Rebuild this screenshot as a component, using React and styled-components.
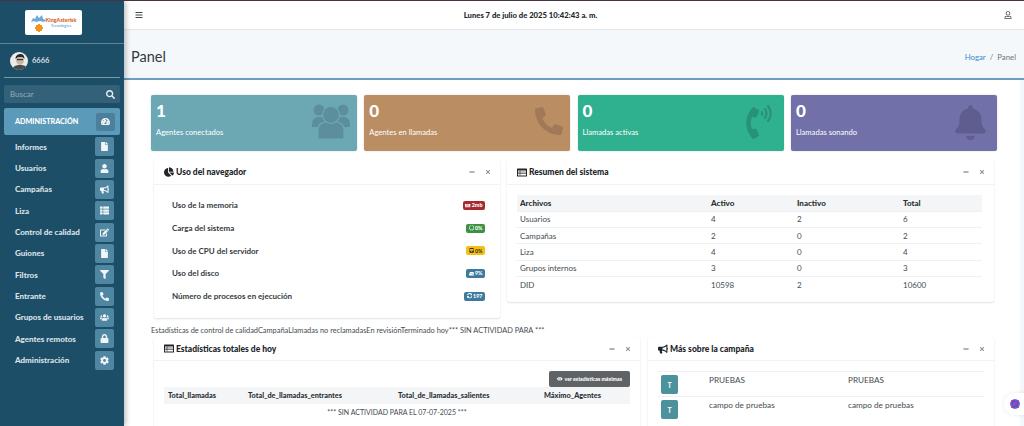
import React from "react";
import styled, { createGlobalStyle } from "styled-components";
import {
  FaBars, FaRegUser, FaSearch, FaTachometerAlt, FaFile, FaUser, FaBullhorn, FaThList, FaEdit, FaFilter,
  FaPhone, FaUsers, FaLock, FaCog, FaPhoneVolume, FaBell, FaChartPie, FaMinus, FaTimes, FaEye,
  FaMemory, FaHdd, FaTrain, FaSyncAlt, FaCircleNotch,
} from "react-icons/fa";

const Global = createGlobalStyle`
  html, body { margin: 0; padding: 0; height: 426px; overflow: hidden; background: #fff; }
  * { box-sizing: border-box; }
  body { font-family: "Lato", "Noto Sans", "Liberation Sans", sans-serif; color: #3a3f44; }
`;

const Shell = styled.div`
  display: flex; width: 1024px; height: 426px; overflow: hidden;
  border-top: 1px solid #4a3340;
`;
const Sidebar = styled.aside`
  width: 124px; flex: none; background: #1d4e68; display: flex; flex-direction: column;
  box-shadow: 2px 0 5px rgba(0,0,0,.25); z-index: 2;
`;
const Brand = styled.div`
  height: 43px; display: flex; align-items: center; padding: 1px 0 0 25px;
  border-bottom: 1px solid #5f8496;
`;
const LogoBox = styled.div`
  width: 57px; height: 25px; background: #fff; border-radius: 2px; display: flex; align-items: center; justify-content: center;
`;
const LogoText = styled.div`
  display: flex; flex-direction: column; align-items: center; line-height: 5.5px; font-size: 5.4px; font-weight: 900; color: #d9631e; white-space: nowrap; margin-top: 1px;
  span { color: #4a8fc7; font-size: 4px; font-weight: 400; }
`;
const UserRow = styled.div`
  height: 34px; margin: 0 4px; display: flex; align-items: center; gap: 4px; padding-left: 6px;
  border-bottom: 1px solid #7a98a6;
`;
const UserName = styled.span`font-size: 7.5px; font-weight: 700; color: #d5dde2;`;
const Search = styled.div`
  margin: 7px 4px 5px; height: 18px; background: #33617a; border-radius: 2px; display: flex; align-items: center; justify-content: space-between;
  padding: 0 5px 0 6px; font-size: 8px; color: #94aab6; svg { color: #e8eef1; font-size: 9px; }
`;
const Active = styled.div`
  margin: 0 4px 1px; height: 27px; background: #5b9ab9; border-radius: 2px; display: flex; align-items: center; justify-content: space-between;
  padding: 0 5px 0 11px; font-size: 7.2px; font-weight: 900; color: #fff;
`;
const Tile = styled.span`
  width: 19px; height: ${p => (p.$dark ? 18 : 19)}px; flex: none; border-radius: 2px; display: flex; align-items: center; justify-content: center;
  background: ${p => (p.$dark ? "#4c7f9b" : "#4f87a3")}; color: #f1f5f7; font-size: 9px;
`;
const Nav = styled.nav`display: flex; flex-direction: column;`;
const NavItem = styled.div`
  height: 21.35px; display: flex; align-items: center; justify-content: space-between; padding: 0 10px 0 15px;
  font-size: 8px; font-weight: 900; color: #d9e2e7; white-space: nowrap;
`;
const Main = styled.main`flex: 1; min-width: 0; display: flex; flex-direction: column; background: #f4f8fb;`;
const Topbar = styled.header`
  height: 29px; flex: none; background: #fff; border-bottom: 1px solid #e3e6e8; display: flex; align-items: center; justify-content: space-between;
  padding: 0 12px 0 11px; color: #40464b; font-size: 8px;
`;
const Clock = styled.div`font-size: 7.7px; font-weight: 900; color: #23272b; margin-right: 86px;`;
const TitleBand = styled.div`
  height: 50px; flex: none; display: flex; align-items: center; justify-content: space-between; padding: 5px 8px 0 7px;
  border-bottom: 2px solid #6a9fc0;
`;
const PageTitle = styled.h1`margin: 0; font-size: 14.5px; font-weight: 400; color: #343a40;`;
const Crumbs = styled.div`font-size: 7.8px; color: #6c757d; display: flex; gap: 4px; span:first-child { color: #3f8bd0; }`;
const Content = styled.div`
  flex: 1; width: 896px; min-height: 0; background: #fff; padding: 15px 23px 0 27px; overflow: hidden;
`;
const Stats = styled.div`display: grid; grid-template-columns: repeat(4, 206px); column-gap: 7.3px;`;
const Stat = styled.div`
  position: relative; height: 56px; border-radius: 2px; padding: 6px 5px; color: #fff; background: ${p => p.$bg}; overflow: hidden;
  box-shadow: 0 0 2px rgba(0,0,0,.18);
`;
const StatNum = styled.div`font-size: 17px; font-weight: 900; line-height: 20px;`;
const StatLabel = styled.div`font-size: 7.6px; margin-top: 6px; line-height: 11px;`;
const StatIcon = styled.span`
  position: absolute; right: ${p => p.$r}px; top: ${p => p.$t}px; color: ${p => p.$c}; font-size: ${p => p.$s}px; display: flex; line-height: 0;
  transform: ${p => (p.$flip ? "scaleX(-1)" : "none")};
`;
const Flip = styled.span`display: inline-flex; transform: scaleX(-1);`;
const Row = styled.div`display: flex; align-items: flex-start; margin-top: ${p => p.$mt}px; padding-left: ${p => p.$pl || 0}px;`;
const Panel = styled.section`
  width: ${p => p.$w}px; margin-right: ${p => p.$mr || 0}px; height: ${p => p.$h}px; background: #fff; border-radius: 2px; flex: none;
  box-shadow: 0 0 1px rgba(0,0,0,.07), 0 1px 2px rgba(0,0,0,.12);
`;
const PanelHead = styled.div`
  height: ${p => p.$h || 25}px; padding: 0 9px 0 10px; display: flex; align-items: center; justify-content: space-between; border-bottom: 1px solid #f0f2f3;
`;
const PanelTitle = styled.h3`
  margin: 0; display: flex; align-items: center; gap: 2px; font-size: 8.5px; font-weight: 900; color: #212529; svg { font-size: 10px; }
`;
const Tools = styled.div`display: flex; gap: 10px; align-items: center; color: #8d9499; font-size: 6px; svg:first-child { color: #666d72; }`;
const UsageList = styled.div`padding: 9px 0 0 18px; display: flex; flex-direction: column;`;
const UsageRow = styled.div`
  height: 22.7px; display: flex; align-items: center; justify-content: space-between; padding-right: 15px;
  font-size: 8px; font-weight: 700; color: #343a40;
`;
const Badge = styled.span`
  height: 9px; padding: 0 2.5px; border-radius: 2px; background: ${p => p.$bg}; color: ${p => p.$fg || "#fff"};
  display: inline-flex; align-items: center; gap: 1px; font-size: 5.4px; font-weight: 900; svg { font-size: 5.4px; }
`;
const Table = styled.table`
  border-collapse: collapse; table-layout: fixed; width: 100%; font-size: 8px; color: #454b50;
  th { background: #f4f5f6; text-align: left; font-weight: 900; color: #2b3035; }
  th, td { padding: 0 3px; height: 16.3px; }
  tbody tr td { border-top: 1px solid #eef0f1; }
`;
const TableWrap = styled.div`padding: 10px 12px 0 10px;`;
const Note = styled.div`font-size: 7.4px; color: #454b50; margin-top: 7px; line-height: 12px; white-space: nowrap;`;
const WideWrap = styled.div`padding: 10px 10px 0 10px;`;
const BtnRow = styled.div`display: flex; justify-content: flex-end;`;
const GreyBtn = styled.button`
  height: 16px; width: 81px; border: 0; border-radius: 2px; background: #5f6366; color: #fff; font: 900 5.2px "Lato", sans-serif;
  display: flex; align-items: center; justify-content: center; gap: 2px; padding: 0; svg { font-size: 5.5px; }
`;
const WideTable = styled.table`
  border-collapse: collapse; table-layout: fixed; width: 100%; font-size: 7.3px; color: #454b50;
  th { background: #f4f5f6; height: 17px; text-align: left; font-weight: 900; color: #2b3035; padding: 0 4px; }
  td { text-align: center; height: 15px; font-size: 7px; }
`;
const CampaignList = styled.div`padding: 10px 10px 0 10px;`;
const CampaignRow = styled.div`
  display: grid; grid-template-columns: 48px 139px 1fr; height: 25.4px; padding: 3px 0 0 3px; border-top: 1px solid #eef0f1; font-size: 8.2px; color: #454b50;
`;
const Avatar = styled.span`
  width: 17px; height: 19px; border-radius: 2px; background: #4b929c; color: #fff; font-size: 7px; font-weight: 700; display: flex; align-items: center; justify-content: center;
`;
const CampaignText = styled.span`line-height: 11px;`;
const Floater = styled.div`
  position: absolute; left: 1004px; top: 393px; width: 24px; height: 22px; border-radius: 11px 0 0 11px; background: #fff;
  box-shadow: 0 0 4px rgba(0,0,0,.08); display: flex; align-items: center; padding-left: 6px;
`;

const LogoMark = () => (
  <svg width="15" height="18" viewBox="0 0 15 18">
    <path d="M0 8 2 4l2 1 2-4 2 3 3-3 1 4 3 1-2 2-4-1-4 1-2-1z" fill="#6fa8d8" />
    <path d="M5 11h2v-1h2v1h2v2h1v2h-1v2H9v1H7v-1H5v-2H4v-2h1z" fill="#f0931f" />
  </svg>
);
const Portrait = () => (
  <svg width="18" height="18" viewBox="0 0 18 18" style={{ flex: "none" }}>
    <clipPath id="av"><circle cx="9" cy="9" r="9" /></clipPath>
    <g clipPath="url(#av)">
      <rect width="18" height="18" fill="#ececec" />
      <path d="M2 18c1-4 4-5 8-5s7 1 8 5z" fill="#4b4b4b" />
      <ellipse cx="10" cy="8" rx="4" ry="5" fill="#c9b8aa" />
      <path d="M5.5 7c0-4 3-5 5-5s4 1 4 5l-2-2H8z" fill="#2c2c2c" />
      <rect x="7" y="7" width="6" height="1.2" fill="#333" />
    </g>
  </svg>
);
const dotColors = ["#e8458b", "#7c4fd0", "#3f7fe0"];
const Dots = () => (
  <svg width="10" height="10" viewBox="0 0 10 10">
    <circle cx="5" cy="5" r="4.8" fill="#5a3fc0" />
    {[1.8, 4, 6, 8.2].flatMap((x, i) => [1.8, 4, 6, 8.2].map((y, j) => (
      <circle key={`${i}${j}`} cx={x} cy={y} r=".9" fill={dotColors[(i + j) % 3]} />
    )))}
  </svg>
);
const TableIcon = () => (
  <svg width="10" height="9" viewBox="0 0 10 9">
    <rect x="0" y="0.5" width="10" height="8" rx="0.6" fill="#212529" />
    <rect x="1" y="2.5" width="8" height="5" fill="#fff" />
    <path d="M1 4h8M1 5.5h8M3 2.5v5" stroke="#212529" strokeWidth=".6" />
  </svg>
);
const ThreeUsers = ({ line }) => (
  <svg width="38" height="35" viewBox="0 0 38 35">
    <circle cx="7" cy="6" r="5.5" fill="currentColor" />
    <circle cx="31" cy="6" r="5.5" fill="currentColor" />
    <path d="M0 21c0-6 3-8 7-8h24c4 0 7 2 7 8v2H0z" fill="currentColor" />
    <path d="M6 35V25c0-5 6-8 13-8s13 3 13 8v10z" fill="currentColor" stroke={line} strokeWidth="1.2" />
    <circle cx="19" cy="11" r="8.5" fill="currentColor" stroke={line} strokeWidth="1.2" />
  </svg>
);

const PhoneFlip = () => <Flip><FaPhone /></Flip>;

const nav = [
  ["Informes", FaFile], ["Usuarios", FaUser], ["Campañas", FaBullhorn], ["Liza", FaThList], ["Control de calidad", FaEdit],
  ["Guiones", FaFile], ["Filtros", FaFilter], ["Entrante", PhoneFlip], ["Grupos de usuarios", FaUsers], ["Agentes remotos", FaLock], ["Administración", FaCog],
];
const stats = [
  { n: "1", l: "Agentes conectados", bg: "#6ba8b4", c: "#5d8e9d", el: <ThreeUsers line="#6ba8b4" />, s: 38, r: 7, t: 9 },
  { n: "0", l: "Agentes en llamadas", bg: "#bb8d63", c: "#a07a58", el: <FaPhone />, s: 28, r: 7, t: 12, flip: true },
  { n: "0", l: "Llamadas activas", bg: "#2fb08f", c: "#27917a", el: <FaPhoneVolume />, s: 34, r: 8, t: 10 },
  { n: "0", l: "Llamadas sonando", bg: "#7270a8", c: "#5f5c90", el: <FaBell />, s: 35, r: 9, t: 10 },
];
const usage = [
  ["Uso de la memoria", "#a92a2e", FaMemory, "2mb"],
  ["Carga del sistema", "#3d9140", FaCircleNotch, "0%"],
  ["Uso de CPU del servidor", "#f6c013", FaTrain, "0%", "#333"],
  ["Uso del disco", "#3d7a9c", FaHdd, "9%"],
  ["Número de procesos en ejecución", "#3d7a9c", FaSyncAlt, "197"],
];
const summary = [
  ["Usuarios", 4, 2, 6], ["Campañas", 2, 0, 2], ["Liza", 4, 0, 4], ["Grupos internos", 3, 0, 3], ["DID", 10598, 2, 10600],
];

const PanelTools = () => (
  <Tools><FaMinus /><FaTimes /></Tools>
);

export default function App() {
  return (
    <Shell>
      <Global />
      <Sidebar>
        <Brand>
          <LogoBox>
            <LogoMark />
            <LogoText>KingAsterisk<span>Tecnologies</span></LogoText>
          </LogoBox>
        </Brand>
        <UserRow><Portrait /><UserName>6666</UserName></UserRow>
        <Search>Buscar<FaSearch /></Search>
        <Active>ADMINISTRACIÓN<Tile $dark><FaTachometerAlt /></Tile></Active>
        <Nav>
          {nav.map(([label, Icon]) => (
            <NavItem key={label}>{label}<Tile><Icon /></Tile></NavItem>
          ))}
        </Nav>
      </Sidebar>
      <Main>
        <Topbar>
          <FaBars />
          <Clock>Lunes 7 de julio de 2025 10:42:43 a. m.</Clock>
          <FaRegUser />
        </Topbar>
        <TitleBand>
          <PageTitle>Panel</PageTitle>
          <Crumbs><span>Hogar</span><span>/</span><span>Panel</span></Crumbs>
        </TitleBand>
        <Content>
          <Stats>
            {stats.map(s => (
              <Stat key={s.l} $bg={s.bg}>
                <StatNum>{s.n}</StatNum>
                <StatLabel>{s.l}</StatLabel>
                <StatIcon $c={s.c} $s={s.s} $r={s.r} $t={s.t} $flip={s.flip}>{s.el}</StatIcon>
              </Stat>
            ))}
          </Stats>
          <Row $mt={9} $pl={3}>
            <Panel $w={346} $h={158} $mr={7}>
              <PanelHead><PanelTitle><FaChartPie />Uso del navegador</PanelTitle><PanelTools /></PanelHead>
              <UsageList>
                {usage.map(([l, bg, Icon, v, fg]) => (
                  <UsageRow key={l}>{l}<Badge $bg={bg} $fg={fg}><Icon />{v}</Badge></UsageRow>
                ))}
              </UsageList>
            </Panel>
            <Panel $w={487} $h={142}>
              <PanelHead><PanelTitle><TableIcon />Resumen del sistema</PanelTitle><PanelTools /></PanelHead>
              <TableWrap>
                <Table>
                  <colgroup><col style={{ width: 191 }} /><col style={{ width: 86 }} /><col style={{ width: 106 }} /><col /></colgroup>
                  <thead><tr><th>Archivos</th><th>Activo</th><th>Inactivo</th><th>Total</th></tr></thead>
                  <tbody>
                    {summary.map(r => <tr key={r[0]}>{r.map((c, i) => <td key={i}>{c}</td>)}</tr>)}
                  </tbody>
                </Table>
              </TableWrap>
            </Panel>
          </Row>
          <Note>Estadísticas de control de calidadCampañaLlamadas no reclamadasEn revisiónTerminado hoy*** SIN ACTIVIDAD PARA ***</Note>
          <Row $mt={0} $pl={3}>
            <Panel $w={486} $h={100} $mr={8}>
              <PanelHead $h={24}><PanelTitle><TableIcon />Estadísticas totales de hoy</PanelTitle><PanelTools /></PanelHead>
              <WideWrap>
                <BtnRow><GreyBtn><FaEye />ver estadísticas máximas</GreyBtn></BtnRow>
                <WideTable>
                  <colgroup><col style={{ width: 80 }} /><col style={{ width: 150 }} /><col style={{ width: 146 }} /><col /></colgroup>
                  <thead><tr><th>Total_llamadas</th><th>Total_de_llamadas_entrantes</th><th>Total_de_llamadas_salientes</th><th>Máximo_Agentes</th></tr></thead>
                  <tbody><tr><td colSpan="4">*** SIN ACTIVIDAD PARA EL 07-07-2025 ***</td></tr></tbody>
                </WideTable>
              </WideWrap>
            </Panel>
            <Panel $w={346} $h={100}>
              <PanelHead $h={24}><PanelTitle><FaBullhorn />Más sobre la campaña</PanelTitle><PanelTools /></PanelHead>
              <CampaignList>
                <CampaignRow><Avatar>T</Avatar><CampaignText>PRUEBAS</CampaignText><CampaignText>PRUEBAS</CampaignText></CampaignRow>
                <CampaignRow><Avatar>T</Avatar><CampaignText>campo de pruebas</CampaignText><CampaignText>campo de pruebas</CampaignText></CampaignRow>
              </CampaignList>
            </Panel>
          </Row>
        </Content>
      </Main>
      <Floater><Dots /></Floater>
    </Shell>
  );
}
